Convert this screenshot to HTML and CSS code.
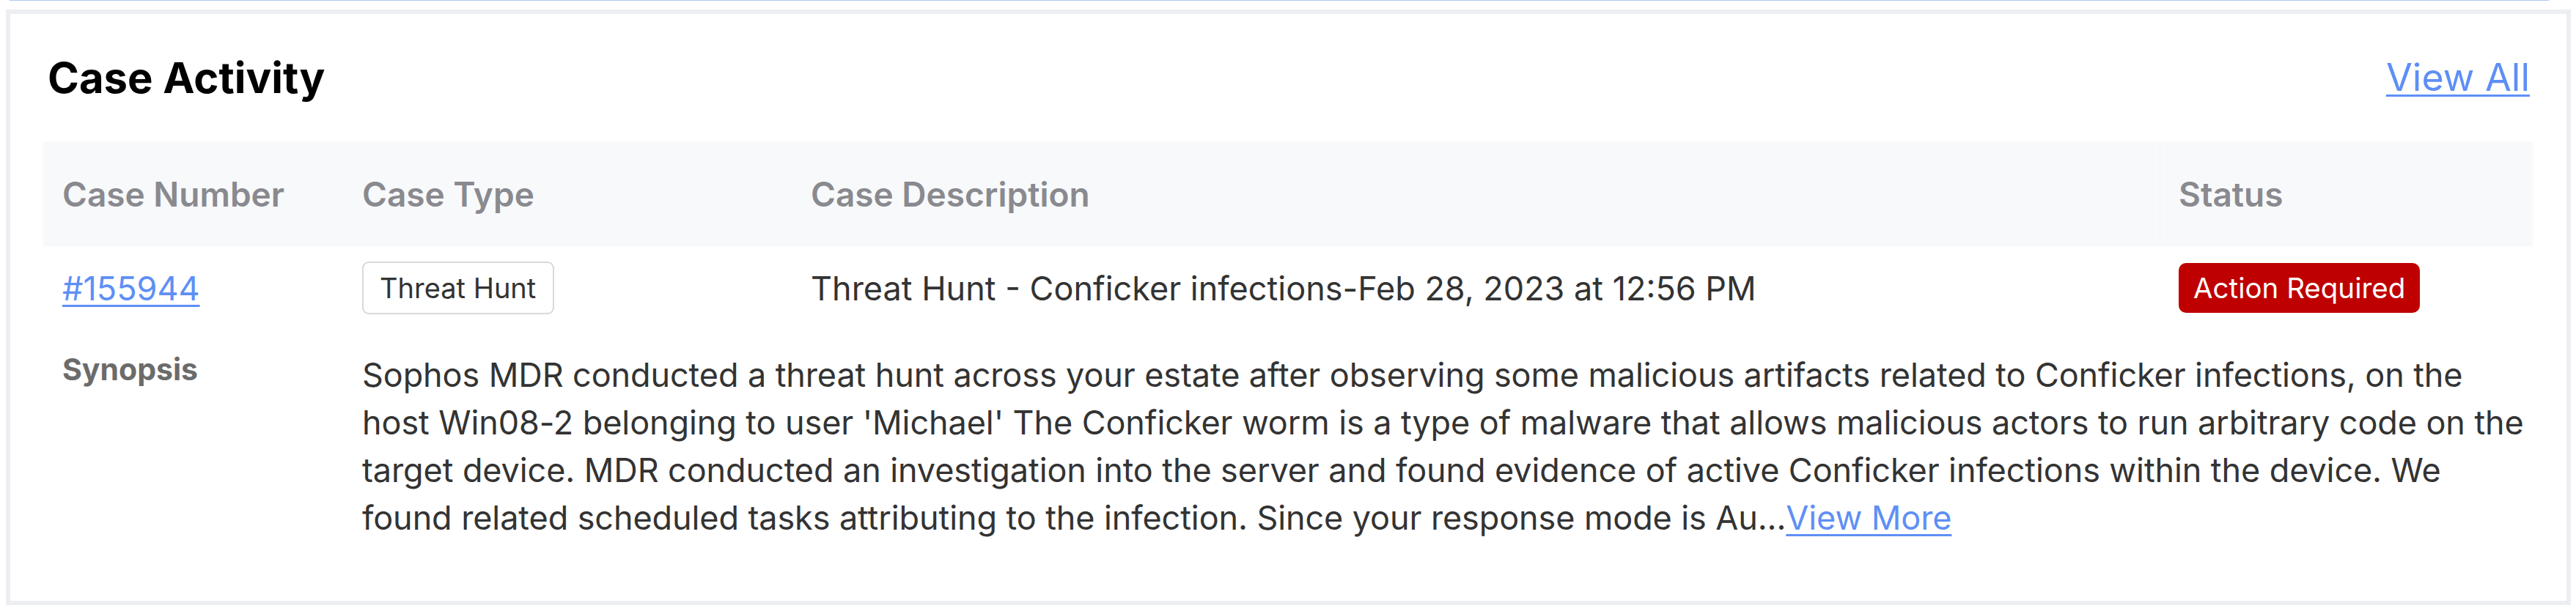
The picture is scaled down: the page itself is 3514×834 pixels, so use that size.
FILE: index.html
```html
<!DOCTYPE html>
<html lang="en">
<head>
    <meta charset="UTF-8">
    <meta name="viewport" content="width=device-width, initial-scale=1.0">
    <title>Case Activity</title>
    <link rel="stylesheet" href="styles.css">
</head>
<body>
    <div class="top-edge"></div>

    <div class="card">
        <div class="card-head">
            <div class="card-title">Case Activity</div>
            <a href="#" class="view-all">View All</a>
        </div>

        <div class="cases">
            <div class="th">Case Number</div>
            <div class="th">Case Type</div>
            <div class="th">Case Description</div>
            <div class="th th-status">Status</div>

            <div class="td"><a href="#" class="case-link">#155944</a></div>
            <div class="td"><span class="type-tag">Threat Hunt</span></div>
            <div class="td desc">Threat Hunt - Conficker infections-Feb 28, 2023 at 12:56 PM</div>
            <div class="td"><span class="status-tag">Action Required</span></div>

            <div class="td synopsis-label">Synopsis</div>
            <div class="td synopsis">Sophos MDR conducted a threat hunt across your estate after observing some malicious artifacts related to Conficker infections, on the host Win08-2 belonging to user 'Michael' The Conficker worm is a type of malware that allows malicious actors to run arbitrary code on the target device. MDR conducted an investigation into the server and found evidence of active Conficker infections within the device. We found related scheduled tasks attributing to the infection. Since your response mode is Au...<a href="#" class="view-more">View More</a></div>
        </div>
    </div>
</body>
</html>
```

FILE: styles.css
```css
body {
    font-family: Inter, "Noto Sans", sans-serif;
    background-color: #ffffff;
    color: #333333;
    margin: 0;
    padding: 0 7px 0 8px;
}
.top-edge {
    height: 1px;
    margin: 0 30px 0 5px;
    background-color: #b3c9f7;
}
.card {
    margin-top: 12px;
    border: 6px solid #eceef2;
    padding: 58px 45px 81px;
    background-color: #ffffff;
}
.card-head {
    display: flex;
    justify-content: space-between;
    align-items: center;
    margin-bottom: 58px;
}
.card-title {
    font-size: 58px;
    line-height: 58px;
    font-weight: 700;
    color: #000000;
    padding-left: 6px;
}
.view-all {
    font-size: 52px;
    line-height: 52px;
    color: #5e8ff5;
    text-decoration: underline;
    text-underline-offset: 5px;
    text-decoration-thickness: 3px;
    margin-right: 5px;
}
.cases {
    display: grid;
    grid-template-columns: 409px 612px 1866px 509px;
}
.th {
    height: 143px;
    display: flex;
    align-items: center;
    padding-left: 26px;
    background-color: #f8f9fb;
    font-size: 46px;
    line-height: 46px;
    font-weight: 600;
    color: #898a8f;
}
.th-status {
    border-left: 1px solid #f3f4f7;
    padding-left: 25px;
}
.td {
    display: flex;
    align-items: center;
    padding: 21px 0 21px 26px;
    min-height: 72px;
    font-size: 45px;
}
.case-link {
    color: #5e8ff5;
    text-decoration: underline;
    text-underline-offset: 6px;
    text-decoration-thickness: 3px;
}
.desc {
    color: #333333;
}
.type-tag {
    display: inline-flex;
    align-items: center;
    box-sizing: border-box;
    height: 72px;
    padding: 0 23px 0 22px;
    border: 2px solid #d8d9dd;
    border-radius: 9px;
    font-size: 38px;
    color: #333333;
}
.status-tag {
    display: inline-flex;
    align-items: center;
    height: 68px;
    padding: 0 20px;
    border-radius: 10px;
    background-color: #bf0000;
    font-size: 38.5px;
    color: #ffffff;
}
.synopsis-label {
    align-items: flex-start;
    padding: 34px 0 0 26px;
    font-size: 41px;
    line-height: 41px;
    font-weight: 700;
    color: #6b6b6b;
}
.synopsis {
    display: block;
    grid-column: 2 / 5;
    padding: 29px 0 0 26px;
    font-size: 45px;
    line-height: 65px;
    letter-spacing: -0.1px;
    color: #333333;
}
.view-more {
    color: #5e8ff5;
    text-decoration: underline;
    text-underline-offset: 6px;
    text-decoration-thickness: 3px;
}
```
